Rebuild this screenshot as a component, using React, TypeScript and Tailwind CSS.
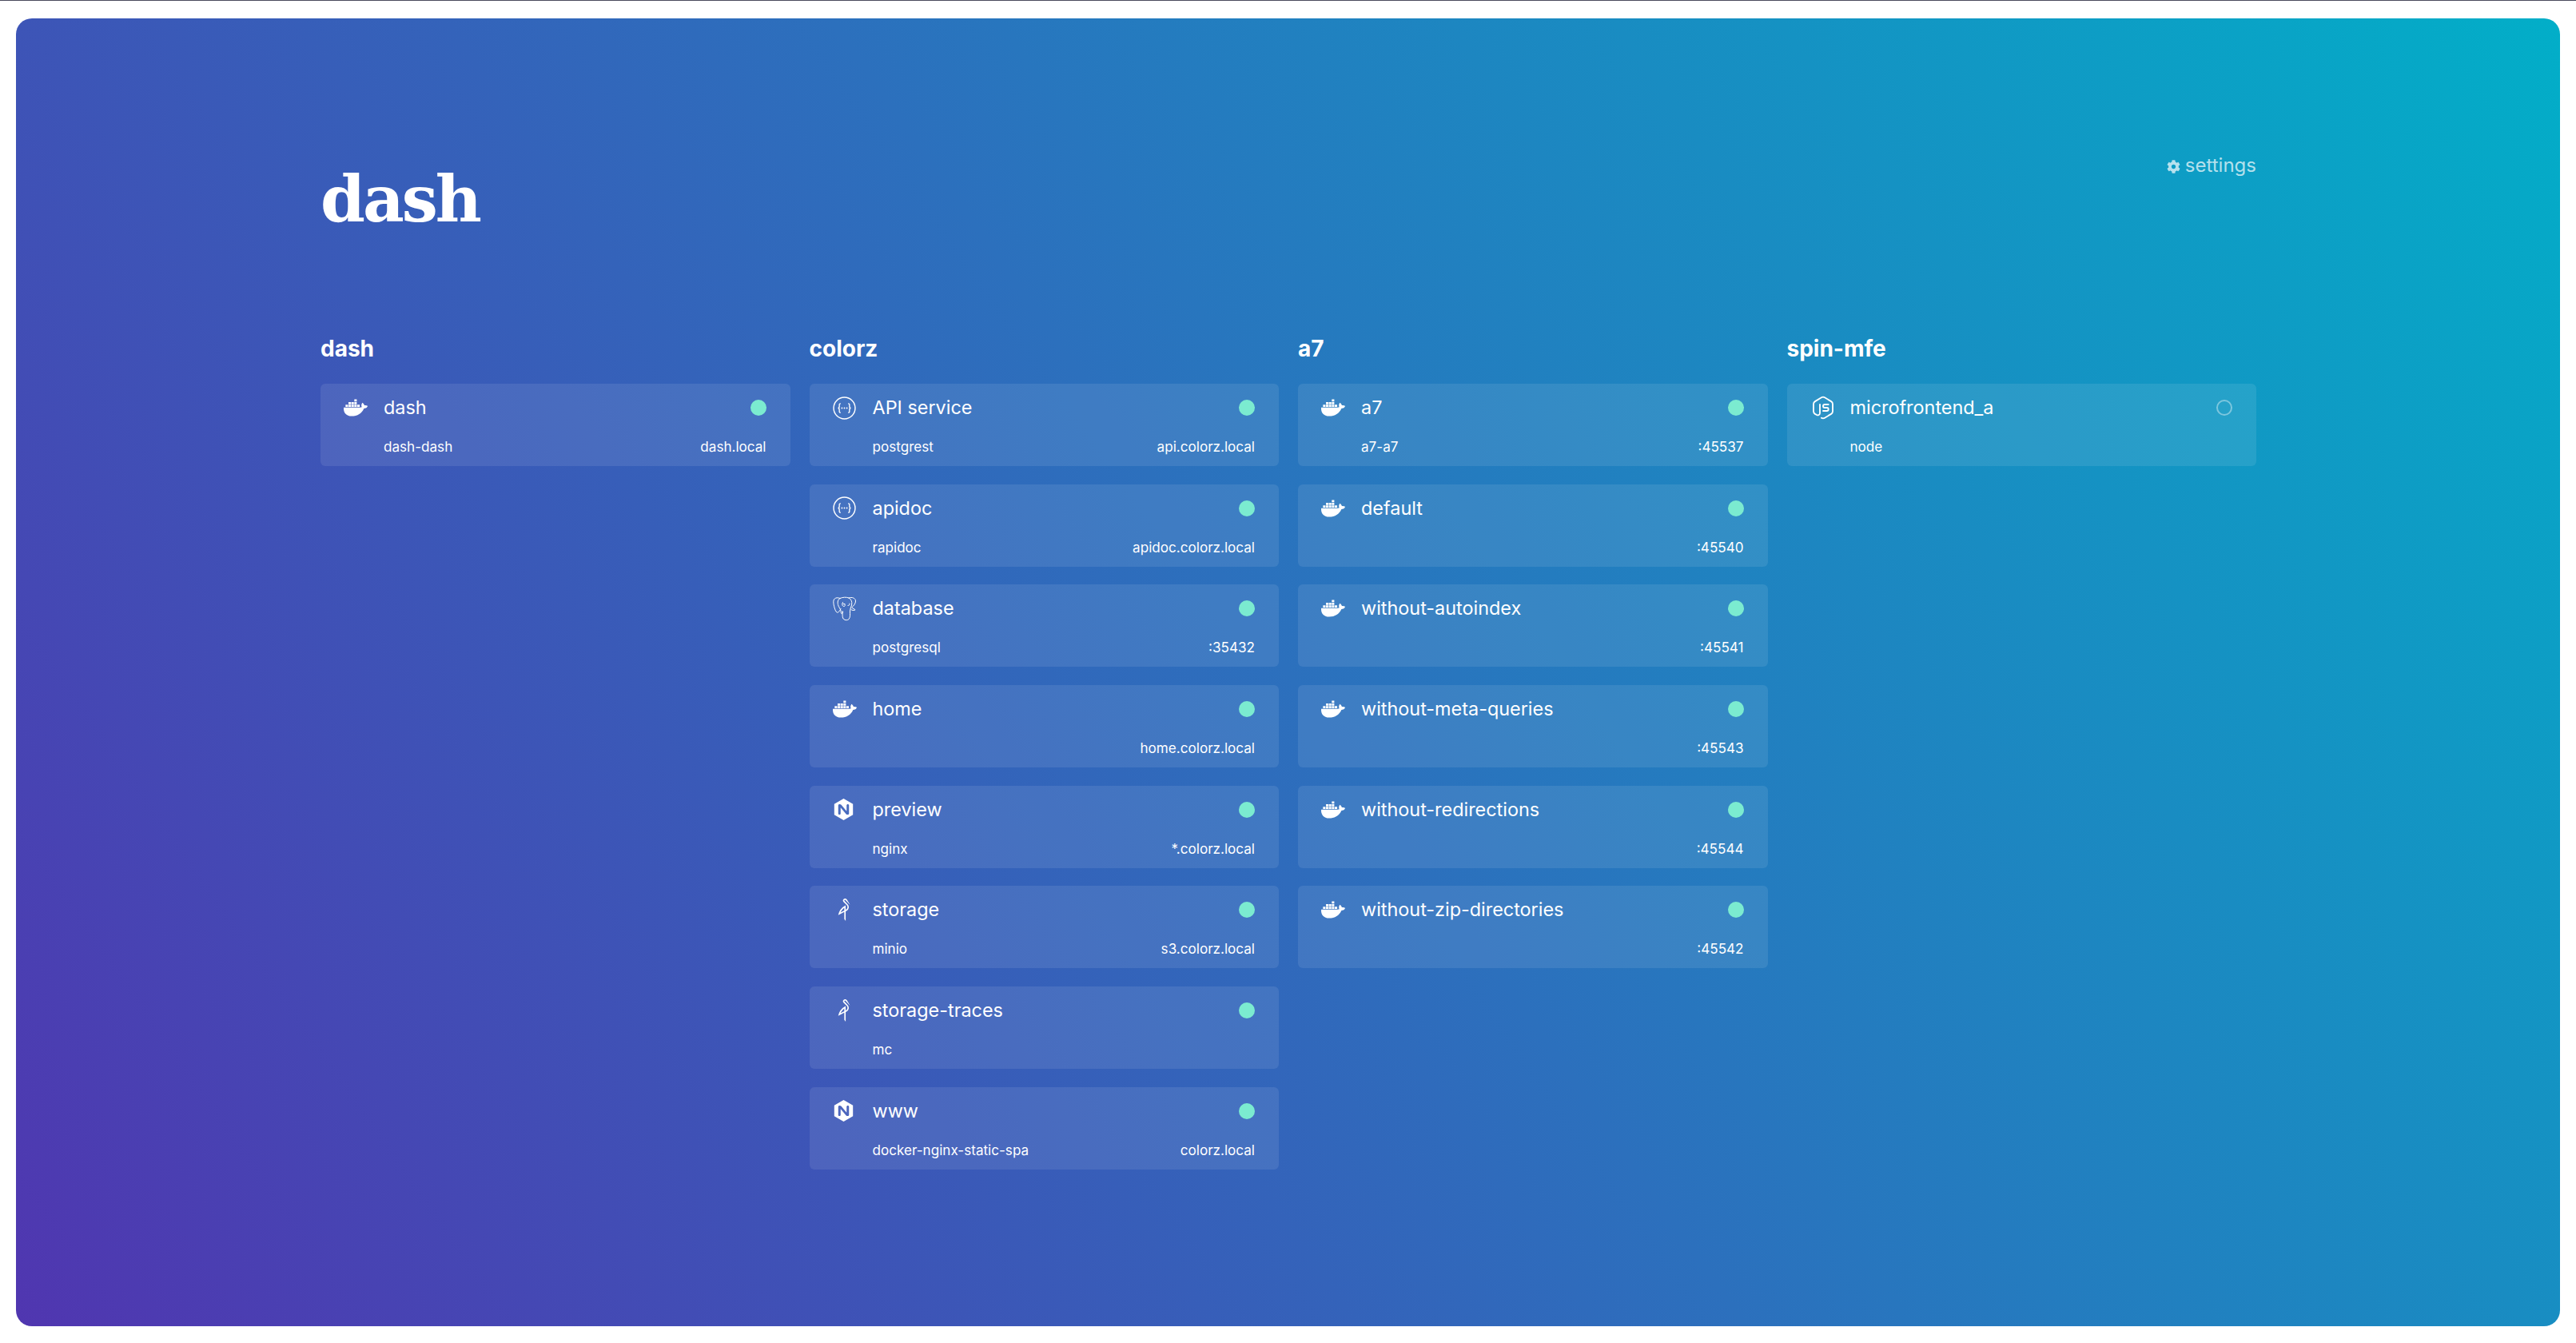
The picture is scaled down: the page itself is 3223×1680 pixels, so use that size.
import { FaCog, FaDocker } from "react-icons/fa";
import { SiMinio, SiNginx } from "react-icons/si";
import { TbBrandNodejs } from "react-icons/tb";

type Kind = "docker" | "swagger" | "postgres" | "nginx" | "minio" | "node";

type Service = {
  name: string;
  icon: Kind;
  image?: string;
  host?: string;
  off?: boolean;
};

const groups: { title: string; services: Service[] }[] = [
  {
    title: "dash",
    services: [{ name: "dash", icon: "docker", image: "dash-dash", host: "dash.local" }],
  },
  {
    title: "colorz",
    services: [
      { name: "API service", icon: "swagger", image: "postgrest", host: "api.colorz.local" },
      { name: "apidoc", icon: "swagger", image: "rapidoc", host: "apidoc.colorz.local" },
      { name: "database", icon: "postgres", image: "postgresql", host: ":35432" },
      { name: "home", icon: "docker", host: "home.colorz.local" },
      { name: "preview", icon: "nginx", image: "nginx", host: "*.colorz.local" },
      { name: "storage", icon: "minio", image: "minio", host: "s3.colorz.local" },
      { name: "storage-traces", icon: "minio", image: "mc" },
      { name: "www", icon: "nginx", image: "docker-nginx-static-spa", host: "colorz.local" },
    ],
  },
  {
    title: "a7",
    services: [
      { name: "a7", icon: "docker", image: "a7-a7", host: ":45537" },
      { name: "default", icon: "docker", host: ":45540" },
      { name: "without-autoindex", icon: "docker", host: ":45541" },
      { name: "without-meta-queries", icon: "docker", host: ":45543" },
      { name: "without-redirections", icon: "docker", host: ":45544" },
      { name: "without-zip-directories", icon: "docker", host: ":45542" },
    ],
  },
  {
    title: "spin-mfe",
    services: [{ name: "microfrontend_a", icon: "node", image: "node", off: true }],
  },
];

function SwaggerIcon() {
  return (
    <svg viewBox="0 0 28 28" className="h-[29px] w-[29px]" fill="none" stroke="currentColor">
      <circle cx="14" cy="14" r="13" strokeWidth="1.4" />
      <path
        d="M9.5 8.5c-2 0-1.6 1.6-1.6 3 0 1.6-.5 2.5-1.6 2.5 1.1 0 1.6.9 1.6 2.5 0 1.4-.4 3 1.6 3M18.5 8.5c2 0 1.6 1.6 1.6 3 0 1.6.5 2.5 1.6 2.5-1.1 0-1.6.9-1.6 2.5 0 1.4.4 3-1.6 3"
        strokeWidth="1.3"
      />
      <path d="M11 14h.01M14 14h.01M17 14h.01" strokeWidth="1.8" strokeLinecap="round" />
    </svg>
  );
}

function PostgresIcon() {
  return (
    <svg
      viewBox="0 0 29 31"
      className="h-[31px] w-[29px]"
      fill="none"
      stroke="currentColor"
      strokeWidth="1"
      strokeLinecap="round"
      strokeLinejoin="round"
    >
      <path d="M9 2.5C5.500.8.8 1.800.8 6.800.8 10.500 2.800 18.500 5 20c2 1 3.800-2.200 5-4.500" />
      <path d="M9 2.500C6 4 5.800 7.500 6.500 10.500c.6 2.500 3 5 3.500 7.500.4 2-.2 3 .8 3.500s1.700-.5 1.700-2.500" />
      <path d="M9 2.500c3.500-1.700 8-1.700 11-.5 3 1.400 4.200 4.800 3.700 8-.5 3-2.200 5-2.200 9 0 4 .6 7-1.500 9.500-2 2-6 1.500-7.500-1.500-.5-2-.5-5-.5-8" />
      <path d="M20 2c4-1.500 8.500 0 8.500 4 0 3-2.500 6-4.800 7.800.8 1.700 3.800 1.700 4.300 3.200-1.800 1-4.500.5-5.500-.8" />
      <path d="M12.500 7.500c-1.500 2-.8 5 1.500 5 1 0 1.500-1 1.200-2M13 9.500h2M21 9c.4 1.500-.6 2.500-2 2.500" />
    </svg>
  );
}

function ServiceIcon({ kind }: { kind: Kind }) {
  if (kind === "docker") return <FaDocker size={30} />;
  if (kind === "swagger") return <SwaggerIcon />;
  if (kind === "postgres") return <PostgresIcon />;
  if (kind === "nginx") return <SiNginx size={27} />;
  if (kind === "minio") return <SiMinio size={28} />;
  return <TbBrandNodejs size={32} strokeWidth={1.4} />;
}

function ServiceCard({ service }: { service: Service }) {
  return (
    <div className="flex h-[103px] rounded-[6px] bg-white/[0.09] pt-[15px] pr-[30px] pl-[29px] text-white">
      <div className="flex h-[30px] w-[50px] shrink-0 items-center">
        <ServiceIcon kind={service.icon} />
      </div>
      <div className="min-w-0 flex-1">
        <div className="flex h-[30px] items-center justify-between">
          <span className="text-[23.4px] leading-[30px]">{service.name}</span>
          {service.off ? (
            <span className="h-[20px] w-[20px] rounded-full border-2 border-white/40" />
          ) : (
            <span className="h-[20px] w-[20px] rounded-full bg-[#7bebd0]" />
          )}
        </div>
        <div className="mt-[22px] flex h-[24px] items-center justify-between text-[17.1px] leading-[24px]">
          <span>{service.image}</span>
          <span>{service.host}</span>
        </div>
      </div>
    </div>
  );
}

export default function App() {
  return (
    <div className="min-h-[1680px] border-t border-[#4a4a5c] bg-white px-[20px] pt-[22px] font-['Inter',sans-serif]">
      <div className="h-[1636px] rounded-[20px] bg-linear-[55deg] from-[#5036b0] via-[#2c70bd] to-[#02aec8] pr-[380px] pl-[381px]">
        <header className="flex justify-between pt-[176px]">
          <h1 className="font-['DejaVu_Serif',serif] text-[80px] leading-[100px] font-bold tracking-[-3px] text-white">
            dash
          </h1>
          <a className="mt-[-7px] flex h-fit items-center gap-[6px] text-[24px] leading-[30px] text-white/70">
            <FaCog size={17} className="mt-[2px]" />
            settings
          </a>
        </header>
        <main className="mt-[119px] grid grid-cols-4 gap-x-[24px]">
          {groups.map((group) => (
            <section key={group.title}>
              <h2 className="mb-[26px] text-[28px] leading-[36px] font-bold text-white">{group.title}</h2>
              <div className="flex flex-col gap-[22.7px]">
                {group.services.map((service) => (
                  <ServiceCard key={service.name} service={service} />
                ))}
              </div>
            </section>
          ))}
        </main>
      </div>
    </div>
  );
}
